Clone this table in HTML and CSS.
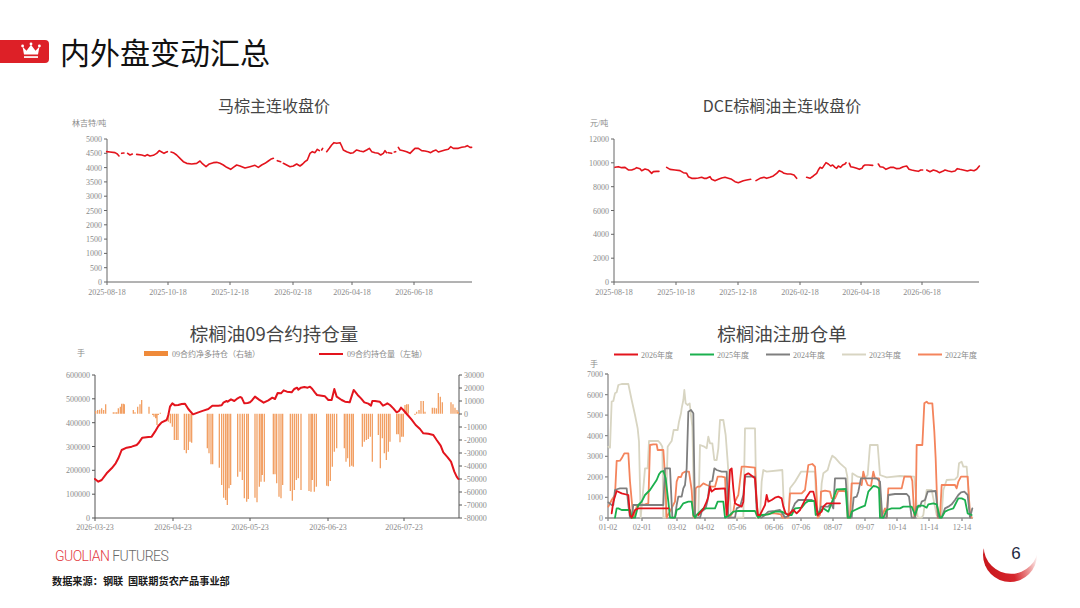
FILE: index.html
```html
<!DOCTYPE html>
<html lang="zh-CN">
<head>
<meta charset="utf-8">
<title>内外盘变动汇总</title>
<link rel="stylesheet" href="styles.css">
</head>
<body>
<div class="slide">
  <header class="hdr">
    <div class="badge">
      <svg class="crown" width="20" height="18" viewBox="0 0 20 18">
        <path class="crown-fill" d="M1.5 4.5 L5.5 8.8 L10 2.8 L14.5 8.8 L18.5 4.5 L17 12.5 L3 12.5 Z"/>
        <circle class="crown-fill" cx="1.6" cy="3.9" r="1.4"/>
        <circle class="crown-fill" cx="10" cy="1.9" r="1.4"/>
        <circle class="crown-fill" cx="18.4" cy="3.9" r="1.4"/>
        <rect class="crown-fill" x="3" y="14.2" width="14" height="1.7"/>
      </svg>
    </div>
    <h1 class="title">内外盘变动汇总</h1>
  </header>

  <main class="grid">
    <!-- Chart 1 -->
    <section class="panel">
      <svg class="chart" width="440" height="212" viewBox="55 88 440 212">
        <text class="ttl" x="274" y="112">马棕主连收盘价</text>
        <text class="lbl" x="72" y="126">林吉特/吨</text>
        <path class="ax" d="M107 139 V282 H472 M104 139H107 M104 153.3H107 M104 167.6H107 M104 181.9H107 M104 196.2H107 M104 210.5H107 M104 224.8H107 M104 239.1H107 M104 253.4H107 M104 267.7H107 M104 282H107 M107 282V285 M168 282V285 M230 282V285 M293 282V285 M352 282V285 M414 282V285"/>
        <g class="lbl r">
          <text x="102" y="142">5000</text><text x="102" y="156.3">4500</text><text x="102" y="170.6">4000</text><text x="102" y="184.9">3500</text><text x="102" y="199.2">3000</text><text x="102" y="213.5">2500</text><text x="102" y="227.8">2000</text><text x="102" y="242.1">1500</text><text x="102" y="256.4">1000</text><text x="102" y="270.7">500</text><text x="102" y="285">0</text>
        </g>
        <g class="lbl m">
          <text x="107" y="295">2025-08-18</text><text x="168" y="295">2025-10-18</text><text x="230" y="295">2025-12-18</text><text x="293" y="295">2026-02-18</text><text x="352" y="295">2026-04-18</text><text x="414" y="295">2026-06-18</text>
        </g>
        <g transform="translate(60 90) scale(0.33333)">
          <path class="d red thin" d="M140,185 L150,186 L165,188 L172,192 L177,198 M185,190 L192,189 M203,190 L210,195 L217,192 M230,193 L245,195 L255,198 L262,194 L270,198 L280,196 L290,190 L298,182 L305,186 L312,190 L318,187 L322,185 M333,186 L340,188 L350,195 L360,205 L370,215 L380,220 L395,222 L410,220 L420,213 L428,222 L438,230 L448,222 L460,218 L470,217 L480,220 L490,225 L500,232 L512,238 L520,232 L530,225 L540,228 L555,234 L570,230 L585,226 L595,232 L605,225 L615,220 L625,213 L632,208 L640,205 M652,212 L662,215 M670,220 L680,225 L690,230 L700,228 L710,222 L720,228 L728,222 L735,215 L742,210 L750,190 L757,185 L765,188 L772,178 L778,182 M785,180 L788,175 M800,185 L808,175 L815,165 L822,158 L830,160 L840,158 L845,168 L850,180 L860,185 L872,190 L880,188 L890,180 L900,183 L910,185 L920,180 L928,175 L935,185 L945,188 L955,190 L962,195 L970,190 L975,182 L980,188 M985,188 L995,190 M1003,186 L1007,185 M1015,172 L1020,180 L1030,182 L1040,185 L1050,190 L1058,182 L1065,175 L1075,175 L1085,182 L1095,183 L1105,185 L1112,188 L1120,183 L1128,180 L1135,186 L1145,183 L1155,180 L1165,178 L1172,170 L1180,175 L1195,175 L1205,172 L1215,170 L1222,167 L1230,172 L1235,172"/>
        </g>
      </svg>
    </section>

    <!-- Chart 2 -->
    <section class="panel">
      <svg class="chart" width="427" height="212" viewBox="575 88 427 212">
        <text class="ttl" x="782" y="112">DCE棕榈油主连收盘价</text>
        <text class="lbl" x="590" y="126">元/吨</text>
        <path class="ax" d="M614 139 V282 H979 M611 139H614 M611 162.8H614 M611 186.7H614 M611 210.5H614 M611 234.3H614 M611 258.2H614 M611 282H614 M614 282V285 M676 282V285 M738 282V285 M800 282V285 M861 282V285 M922 282V285"/>
        <g class="lbl r">
          <text x="609" y="142">12000</text><text x="609" y="165.8">10000</text><text x="609" y="189.7">8000</text><text x="609" y="213.5">6000</text><text x="609" y="237.3">4000</text><text x="609" y="261.2">2000</text><text x="609" y="285">0</text>
        </g>
        <g class="lbl m">
          <text x="614" y="295">2025-08-18</text><text x="676" y="295">2025-10-18</text><text x="738" y="295">2025-12-18</text><text x="800" y="295">2026-02-18</text><text x="861" y="295">2026-04-18</text><text x="922" y="295">2026-06-18</text>
        </g>
        <g transform="translate(580 90) scale(0.33333)">
          <path class="d red thin" d="M105,232 L115,230 L125,233 L135,232 L145,240 L155,240 L165,236 L170,233 L180,236 L185,242 L195,237 L205,240 L210,245 L215,250 L220,245 L230,244 L237,244 M260,232 L270,238 L285,240 L300,242 L310,248 L320,250 L325,260 L335,265 L345,265 L355,264 L365,262 L372,265 L380,265 L390,260 L395,268 L405,272 L415,268 L425,264 L435,262 L445,265 L455,268 L465,275 L475,278 L490,272 L500,270 L512,268 M528,272 L540,265 L552,262 L560,265 L570,262 L580,258 L590,250 L598,242 L605,245 L612,250 L622,252 L632,252 L642,255 L650,265 M680,262 L690,265 L700,258 L710,250 L715,240 L720,232 L726,235 L730,230 L738,218 L745,222 L752,228 L758,225 L765,232 L770,235 L775,228 L782,232 L788,225 L795,222 L798,218 M808,220 L812,230 L820,232 L830,235 L838,238 L846,235 L850,228 L855,225 L865,225 L878,226 M895,222 L900,230 L910,232 L918,238 L925,235 L932,232 L940,232 L950,236 L960,235 L970,230 L980,228 L987,238 L995,240 L1005,242 L1015,244 L1022,240 L1028,240 M1040,240 L1050,245 L1060,240 L1070,243 L1078,248 L1088,244 L1095,240 L1105,243 L1115,245 L1125,243 L1132,236 L1140,238 L1150,240 L1162,243 L1172,240 L1182,242 L1190,238 L1198,228"/>
        </g>
      </svg>
    </section>

    <!-- Chart 3 -->
    <section class="panel">
      <svg class="chart" width="440" height="228" viewBox="55 308 440 228">
        <text class="ttl big" x="274" y="341">棕榈油09合约持仓量</text>
        <text class="lbl" x="77" y="356">手</text>
        <rect class="sw-orange" x="144" y="351" width="24" height="5"/>
        <text class="lbl" x="172" y="357">09合约净多持仓（右轴）</text>
        <path class="legend-red" d="M319 354 H343"/>
        <text class="lbl" x="347" y="357">09合约持仓量（左轴）</text>
        <path class="ax dark" d="M95 375 V518 H459 V375 M92 375H95 M92 398.8H95 M92 422.7H95 M92 446.5H95 M92 470.3H95 M92 494.2H95 M92 518H95 M459 375H462 M459 388H462 M459 401H462 M459 414H462 M459 427H462 M459 440H462 M459 453H462 M459 466H462 M459 479H462 M459 492H462 M459 505H462 M459 518H462 M95 518V521 M173 518V521 M250 518V521 M328 518V521 M404 518V521"/>
        <g class="lbl r">
          <text x="90" y="378">600000</text><text x="90" y="401.8">500000</text><text x="90" y="425.7">400000</text><text x="90" y="449.5">300000</text><text x="90" y="473.3">200000</text><text x="90" y="497.2">100000</text><text x="90" y="521">0</text>
        </g>
        <g class="lbl">
          <text x="464" y="378">30000</text><text x="464" y="391">20000</text><text x="464" y="404">10000</text><text x="464" y="417">0</text><text x="464" y="430">-10000</text><text x="464" y="443">-20000</text><text x="464" y="456">-30000</text><text x="464" y="469">-40000</text><text x="464" y="482">-50000</text><text x="464" y="495">-60000</text><text x="464" y="508">-70000</text><text x="464" y="521">-80000</text>
        </g>
        <g class="lbl m">
          <text x="95" y="530">2026-03-23</text><text x="173" y="530">2026-04-23</text><text x="250" y="530">2026-05-23</text><text x="328" y="530">2026-06-23</text><text x="404" y="530">2026-07-23</text>
        </g>
        <g transform="translate(55 315) scale(0.33333)">
          <path class="d bars" d="M122 296V288M128 296V285M134 296V284M140 296V280M146 296V285M152 296V268M175 296V292M180 296V292M185 296V292M190 296V280M196 296V275M200 296V266M205 296V266M208 296V268M235 296V285M240 296V292M248 296V275M255 296V268M260 296V255M282 296V275M293 296V300M297 296V305M302 296V310M306 296V330M310 296V300M316 296V293M340 296V320M346 296V325M352 296V335M358 296V375M364 296V375M369 296V375M388 296V405M394 296V415M400 296V405M405 296V380M410 296V383M457 296V400M462 296V415M468 296V448M473 296V448M493 296V458M500 296V510M506 296V548M512 296V555M517 296V570M522 296V520M527 296V510M548 296V485M555 296V470M562 296V495M568 296V550M575 296V560M580 296V552M600 296V548M606 296V562M613 296V515M618 296V500M622 296V480M628 296V500M655 296V478M660 296V478M665 296V505M672 296V545M678 296V550M683 296V510M706 296V528M712 296V557M718 296V525M724 296V495M730 296V490M738 296V525M762 296V528M768 296V530M772 296V495M778 296V530M784 296V515M815 296V512M820 296V514M826 296V498M832 296V455M838 296V410M845 296V400M868 296V400M873 296V440M878 296V430M884 296V455M890 296V452M895 296V455M922 296V395M928 296V380M934 296V375M940 296V372M946 296V365M952 296V440M970 296V360M976 296V460M982 296V370M988 296V415M994 296V435M1000 296V410M1005 296V380M1025 296V358M1030 296V358M1035 296V382M1040 296V365M1045 296V365M1050 296V270M1055 296V268M1060 296V268M1080 296V300M1085 296V290M1092 296V285M1098 296V258M1105 296V258M1110 296V290M1132 296V278M1138 296V278M1144 296V280M1150 296V234M1156 296V245M1162 296V262M1188 296V262M1194 296V268M1200 296V278M1206 296V285M1210 296V290"/>
          <path class="d red thick" d="M120,492 L130,500 L140,495 L155,475 L170,460 L182,445 L190,430 L200,405 L215,398 L230,395 L245,390 L250,385 L262,368 L280,366 L290,365 L300,350 L310,333 L320,322 L335,315 L340,300 L345,275 L352,265 L360,271 L370,270 L380,267 L390,266 L400,282 L405,288 L414,298 L430,292 L445,287 L460,282 L472,272 L490,272 L500,271 L505,263 L515,258 L518,260 L528,253 L538,258 L548,250 L555,246 L560,248 L568,265 L578,264 L585,262 L592,255 L600,245 L612,254 L626,263 L640,256 L652,248 L660,252 L668,234 L678,235 L686,226 L696,230 L710,232 L718,222 L726,218 L730,224 L738,218 L748,216 L758,218 L765,215 L772,222 L780,233 L786,240 L800,242 L810,244 L820,255 L830,255 L838,222 L845,245 L860,255 L870,260 L884,262 L896,225 L908,240 L918,250 L928,262 L940,266 L948,272 L952,258 L960,258 L974,260 L984,272 L992,268 L997,265 L1005,270 L1015,280 L1025,292 L1032,288 L1038,278 L1045,285 L1058,300 L1070,314 L1082,330 L1095,342 L1105,355 L1120,356 L1135,360 L1145,375 L1157,392 L1165,412 L1178,427 L1188,440 L1198,470 L1205,485 L1210,492"/>
        </g>
      </svg>
    </section>

    <!-- Chart 4 -->
    <section class="panel">
      <svg class="chart" width="427" height="228" viewBox="575 308 427 228">
        <text class="ttl big" x="782" y="341">棕榈油注册仓单</text>
        <path class="leg l26" d="M614 354.5 H638"/><text class="lbl" x="641" y="357.5">2026年度</text>
        <path class="leg l25" d="M690 354.5 H714"/><text class="lbl" x="717" y="357.5">2025年度</text>
        <path class="leg l24" d="M766 354.5 H790"/><text class="lbl" x="793" y="357.5">2024年度</text>
        <path class="leg l23" d="M842 354.5 H866"/><text class="lbl" x="869" y="357.5">2023年度</text>
        <path class="leg l22" d="M918 354.5 H942"/><text class="lbl" x="945" y="357.5">2022年度</text>
        <text class="lbl" x="590" y="367">手</text>
        <path class="ax grey" d="M608 374 V518 H973 M605 374H608 M605 394.6H608 M605 415.1H608 M605 435.7H608 M605 456.3H608 M605 476.9H608 M605 497.4H608 M605 518H608 M608 518V521 M642 518V521 M677 518V521 M705 518V521 M737 518V521 M774 518V521 M801 518V521 M833 518V521 M865 518V521 M897 518V521 M929 518V521 M962 518V521"/>
        <g class="lbl r">
          <text x="603" y="377">7000</text><text x="603" y="397.6">6000</text><text x="603" y="418.1">5000</text><text x="603" y="438.7">4000</text><text x="603" y="459.3">3000</text><text x="603" y="479.9">2000</text><text x="603" y="500.4">1000</text><text x="603" y="521">0</text>
        </g>
        <g class="lbl m">
          <text x="608" y="530">01-02</text><text x="642" y="530">02-01</text><text x="677" y="530">03-02</text><text x="705" y="530">04-02</text><text x="737" y="530">05-06</text><text x="774" y="530">06-06</text><text x="801" y="530">07-06</text><text x="833" y="530">08-07</text><text x="865" y="530">09-07</text><text x="897" y="530">10-14</text><text x="929" y="530">11-14</text><text x="962" y="530">12-14</text>
        </g>
        <g transform="translate(575 315) scale(0.33333)">
          <path class="d s l23" d="M100,395 L105,398 L110,260 L115,258 L120,235 L125,232 L130,210 L140,207 L160,207 L170,255 L180,300 L188,340 L192,380 L197,608 L205,520 L210,460 L218,460 L222,378 L250,378 L256,385 L262,395 L265,608 L272,608 L278,395 L285,385 L290,378 L296,345 L308,345 L312,320 L318,295 L320,280 L325,255 L328,225 L332,265 L338,270 L344,265 L352,335 L358,608 L370,608 L375,390 L388,395 L395,400 L400,365 L405,385 L412,385 L418,435 L425,435 L430,400 L435,315 L445,315 L452,360 L458,440 L462,500 L468,608 L505,608 L510,340 L540,340 L545,608 L555,608 L560,500 L565,465 L575,470 L622,465 L628,608 L640,608 L645,520 L660,500 L678,470 L720,470 L725,590 L735,590 L740,505 L745,475 L758,465 L765,440 L772,422 L780,428 L795,445 L812,460 L817,485 L822,608 L828,608 L832,475 L848,485 L870,490 L878,480 L885,390 L908,390 L915,480 L935,487 L975,483 L1018,485 L1028,608 L1040,608 L1045,600 L1055,525 L1070,525 L1085,600 L1095,608 L1100,600 L1105,525 L1115,495 L1140,493 L1148,485 L1152,445 L1160,440 L1165,455 L1175,455 L1180,520 L1185,600 L1192,608"/>
          <path class="d s l22" d="M100,575 L110,555 L120,540 L125,438 L135,437 L140,430 L148,415 L160,415 L165,500 L170,555 L175,608 L185,575 L195,570 L210,568 L220,565 L225,390 L235,388 L245,388 L248,405 L265,405 L270,480 L275,608 L300,560 L305,500 L310,486 L318,486 L322,475 L330,470 L342,470 L350,525 L355,605 L360,608 L362,520 L368,515 L375,515 L385,505 L395,510 L410,515 L420,515 L428,485 L440,485 L450,487 L455,580 L460,608 L470,598 L475,590 L480,560 L490,540 L500,455 L510,455 L540,458 L545,560 L550,608 L560,600 L570,600 L590,595 L600,595 L618,598 L622,608 L640,608 L645,535 L660,535 L680,535 L690,525 L700,450 L712,447 L720,455 L723,500 L728,608 L735,600 L738,530 L750,527 L765,530 L770,550 L780,550 L790,528 L805,528 L815,530 L818,608 L825,608 L830,505 L845,505 L855,505 L860,510 L865,470 L870,490 L878,510 L888,513 L895,470 L900,490 L912,490 L918,605 L922,600 L930,580 L935,608 L940,520 L980,520 L988,485 L1008,485 L1012,498 L1018,608 L1022,600 L1025,390 L1042,390 L1048,265 L1055,260 L1060,265 L1072,265 L1078,350 L1082,430 L1088,608 L1095,608 L1100,510 L1140,510 L1145,520 L1150,500 L1158,485 L1178,485 L1185,600 L1190,608"/>
          <path class="d s l24" d="M100,562 L110,570 L115,570 L120,525 L128,522 L135,520 L155,520 L160,570 L165,608 L170,608 L175,570 L265,570 L270,460 L285,460 L292,608 L300,608 L305,570 L310,545 L320,545 L325,520 L330,510 L335,460 L340,290 L348,285 L355,295 L360,608 L375,608 L380,590 L392,580 L398,555 L405,500 L412,498 L418,460 L425,465 L440,470 L455,470 L460,608 L480,608 L485,580 L495,575 L505,540 L510,485 L540,485 L545,580 L550,608 L560,608 L570,600 L580,590 L600,588 L615,585 L625,600 L630,608 L645,600 L660,565 L670,555 L710,555 L720,560 L730,600 L738,575 L760,575 L768,565 L775,580 L780,490 L812,490 L820,608 L830,608 L836,548 L845,545 L850,530 L858,490 L895,490 L905,490 L915,500 L922,608 L935,608 L940,540 L960,537 L995,537 L1002,545 L1010,608 L1020,608 L1025,575 L1035,575 L1040,560 L1050,555 L1058,530 L1082,528 L1090,608 L1100,608 L1110,580 L1120,575 L1130,568 L1140,555 L1150,540 L1158,532 L1168,530 L1178,540 L1185,608 L1192,580"/>
          <path class="d s l25" d="M120,608 L125,580 L130,580 L140,585 L165,585 L170,608 L180,608 L190,570 L200,560 L210,540 L225,525 L235,510 L245,495 L252,478 L258,470 L265,468 L272,490 L280,560 L285,608 L300,608 L305,585 L315,580 L325,565 L340,560 L350,560 L355,600 L360,608 L365,600 L375,590 L385,580 L420,580 L428,560 L445,560 L450,608 L465,600 L475,590 L490,588 L540,588 L545,600 L550,608 L560,600 L580,598 L600,590 L620,590 L640,600 L650,600 L660,580 L680,578 L690,565 L700,558 L718,558 L722,600 L735,590 L745,580 L760,590 L785,523 L812,522 L818,608 L825,608 L830,590 L840,585 L855,578 L870,572 L880,530 L895,513 L905,515 L912,520 L915,608 L925,608 L935,585 L950,580 L975,580 L985,575 L1010,575 L1020,600 L1030,572 L1045,572 L1055,578 L1060,568 L1075,565 L1085,568 L1095,608 L1100,608 L1110,590 L1120,585 L1135,580 L1140,570 L1150,550 L1160,550 L1170,555 L1178,595 L1190,600"/>
          <path class="d s l26" d="M110,595 L115,560 L125,528 L140,535 L160,540 L165,600 L170,608 L180,585 L190,580 L280,580 M370,600 L385,582 L395,560 L400,545 L405,515 L410,530 L420,522 L450,520 L455,600 L460,555 L465,465 L470,460 L475,520 L480,565 L485,568 L500,575 L505,560 L510,480 L520,475 L540,490 L548,600 L555,600 L570,570 L575,540 L580,560 L590,555 L600,548 L610,545 L620,550 L625,575 L632,595 L640,600 L655,585 L665,595 L675,585 L685,565 L695,545 L705,530 L715,530 L722,560 L728,600 L740,590 L745,575 L755,565 L795,565"/>
        </g>
      </svg>
    </section>
  </main>

  <footer class="foot">
    <div class="brand"><span class="brand-red">GUOLIAN</span> <span class="brand-grey">FUTURES</span></div>
    <div class="source">数据来源：钢联&nbsp;&nbsp;国联期货农产品事业部</div>
  </footer>

  <div class="pagenum">
    <svg width="64" height="72" viewBox="980 514 64 72">
      <defs>
        <linearGradient id="pg" x1="0" y1="0.7" x2="1" y2="0.45">
          <stop offset="0" stop-color="#c8161c"/>
          <stop offset="0.5" stop-color="#d6262c"/>
          <stop offset="0.82" stop-color="#efa6a6"/>
          <stop offset="1" stop-color="#ffffff"/>
        </linearGradient>
      </defs>
      <circle cx="1010" cy="555" r="27" fill="url(#pg)"/>
      <circle cx="1011" cy="546.5" r="27.3" fill="#ffffff"/>
      <text class="pnum" x="1016" y="559">6</text>
    </svg>
  </div>
</div>
</body>
</html>
```

FILE: styles.css
```css
* { box-sizing: border-box; }
html, body { margin: 0; padding: 0; background: #ffffff; }
.slide {
  position: relative;
  width: 1080px;
  height: 608px;
  overflow: hidden;
  background: #ffffff;
  font-family: "Noto Sans CJK SC", "Noto Sans", sans-serif;
}
.hdr {
  display: flex;
  align-items: center;
  height: 40px;
  margin-top: 31px;
}
.badge {
  width: 49px;
  height: 23px;
  background: #dd2027;
  border-radius: 0 4px 4px 0;
  display: flex;
  align-items: center;
  justify-content: flex-end;
  padding-right: 8px;
}
.crown { display: block; }
.crown-fill { fill: #ffffff; }
.title {
  margin: 0 0 0 11px;
  font-size: 30px;
  font-weight: 400;
  line-height: 40px;
  color: #111111;
  font-family: "Noto Sans CJK SC", sans-serif;
}
.grid {
  display: grid;
  grid-template-columns: 440px 427px;
  grid-template-rows: 212px 228px;
  column-gap: 80px;
  row-gap: 8px;
  margin: 17px 0 0 55px;
}
.panel { background: #ffffff; }
.chart { display: block; overflow: hidden; }
.ttl {
  font-family: "Noto Sans CJK SC", sans-serif;
  font-size: 16px;
  fill: #454545;
  text-anchor: middle;
}
.ttl.big { font-size: 18.5px; }
.lbl {
  font-family: "Liberation Serif", "Noto Sans CJK SC", serif;
  font-size: 8px;
  fill: #8a8a8a;
}
.r, .r text { text-anchor: end; }
.m, .m text { text-anchor: middle; }
.ax { fill: none; stroke: #666666; stroke-width: 1; }
.ax.dark { stroke: #555555; }
.ax.grey { stroke: #8c8c8c; stroke-width: 1.3; }
.d {
  fill: none;
  vector-effect: non-scaling-stroke;
  stroke-linejoin: round;
  stroke-linecap: round;
}
.red { stroke: #e3141d; }
.thin { stroke-width: 1.6; }
.thick { stroke-width: 2; }
.bars { stroke: #f2a064; stroke-width: 1.3; stroke-linecap: butt; }
.sw-orange { fill: #ef8a3a; }
.legend-red { stroke: #e3141d; stroke-width: 2; fill: none; }
.s { stroke-width: 1.8; }
.leg { fill: none; stroke-width: 2; }
.l26 { stroke: #e3141d; }
.l25 { stroke: #1bb04e; }
.l24 { stroke: #7f7f7f; }
.l23 { stroke: #d8d5c2; }
.l22 { stroke: #f4845c; }
.foot {
  margin: 11px 0 0 55px;
}
.brand {
  font-family: Roboto, "Open Sans", sans-serif;
  font-weight: 300;
  font-size: 14px;
  line-height: 18px;
  letter-spacing: -0.55px;
}
.brand-red { color: #e33a3f; }
.brand-grey { color: #6a6a6a; }
.source {
  margin: 9px 0 0 -3px;
  font-family: "Noto Sans CJK SC", sans-serif;
  font-weight: 700;
  font-size: 10.2px;
  line-height: 14px;
  color: #1a1a1a;
}
.pagenum {
  position: absolute;
  left: 980px;
  top: 514px;
  width: 64px;
  height: 72px;
}
.pagenum svg { display: block; }
.pnum {
  font-family: "Liberation Sans", Arial, sans-serif;
  font-size: 17px;
  fill: #1f2a44;
  text-anchor: middle;
}
```
